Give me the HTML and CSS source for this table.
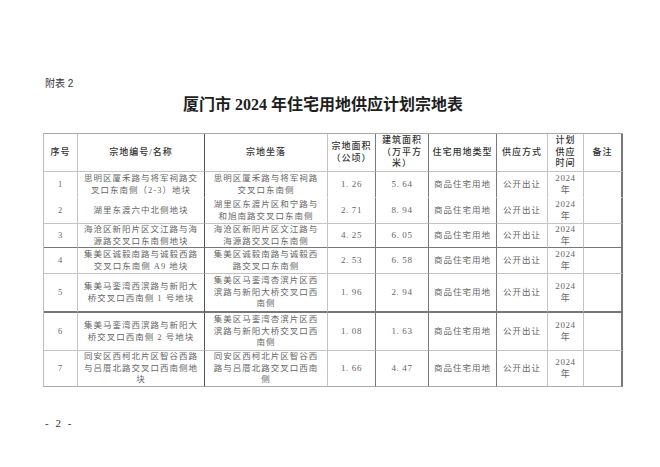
FILE: index.html
```html
<!DOCTYPE html>
<html lang="zh-CN">
<head>
<meta charset="utf-8">
<title>附表 2</title>
<link rel="stylesheet" href="styles.css">
</head>
<body>
<div class="page">
  <div class="label">附表 2</div>
  <h1 class="title">厦门市 2024 年住宅用地供应计划宗地表</h1>
  <table class="sheet">
    <thead>
      <tr class="r-head">
        <th class="c1">序号</th>
        <th class="c2">宗地编号/名称</th>
        <th class="c3">宗地坐落</th>
        <th class="c4">宗地面积<br>（公顷）</th>
        <th class="c5">建筑面积<br>（万平方<br>米）</th>
        <th class="c6">住宅用地类型</th>
        <th class="c7">供应方式</th>
        <th class="c8">计划<br>供应<br>时间</th>
        <th class="c9">备注</th>
      </tr>
    </thead>
    <tbody>
      <tr class="r1">
        <td class="c1">1</td>
        <td class="c2">思明区厦禾路与将军祠路交<br>叉口东南侧（2-3）地块</td>
        <td class="c3">思明区厦禾路与将军祠路<br>交叉口东南侧</td>
        <td class="c4 num">1. 26</td>
        <td class="c5 num">5. 64</td>
        <td class="c6">商品住宅用地</td>
        <td class="c7">公开出让</td>
        <td class="c8 num">2024<br>年</td>
        <td class="c9"></td>
      </tr>
      <tr class="r2">
        <td class="c1">2</td>
        <td class="c2">湖里东渡六中北侧地块</td>
        <td class="c3">湖里区东渡片区和宁路与<br>和旭南路交叉口东南侧</td>
        <td class="c4 num">2. 71</td>
        <td class="c5 num">8. 94</td>
        <td class="c6">商品住宅用地</td>
        <td class="c7">公开出让</td>
        <td class="c8 num">2024<br>年</td>
        <td class="c9"></td>
      </tr>
      <tr class="r3">
        <td class="c1">3</td>
        <td class="c2">海沧区新阳片区文江路与海<br>源路交叉口东南侧地块</td>
        <td class="c3">海沧区新阳片区文江路与<br>海源路交叉口东南侧</td>
        <td class="c4 num">4. 25</td>
        <td class="c5 num">6. 05</td>
        <td class="c6">商品住宅用地</td>
        <td class="c7">公开出让</td>
        <td class="c8 num">2024<br>年</td>
        <td class="c9"></td>
      </tr>
      <tr class="r4">
        <td class="c1">4</td>
        <td class="c2">集美区诚毅南路与诚毅西路<br>交叉口东南侧 A9 地块</td>
        <td class="c3">集美区诚毅南路与诚毅西<br>路交叉口东南侧</td>
        <td class="c4 num">2. 53</td>
        <td class="c5 num">6. 58</td>
        <td class="c6">商品住宅用地</td>
        <td class="c7">公开出让</td>
        <td class="c8 num">2024<br>年</td>
        <td class="c9"></td>
      </tr>
      <tr class="r5">
        <td class="c1">5</td>
        <td class="c2">集美马銮湾西滨路与新阳大<br>桥交叉口西南侧 1 号地块</td>
        <td class="c3">集美区马銮湾杏滨片区西<br>滨路与新阳大桥交叉口西<br>南侧</td>
        <td class="c4 num">1. 96</td>
        <td class="c5 num">2. 94</td>
        <td class="c6">商品住宅用地</td>
        <td class="c7">公开出让</td>
        <td class="c8 num">2024<br>年</td>
        <td class="c9"></td>
      </tr>
      <tr class="r6">
        <td class="c1">6</td>
        <td class="c2">集美马銮湾西滨路与新阳大<br>桥交叉口西南侧 2 号地块</td>
        <td class="c3">集美区马銮湾杏滨片区西<br>滨路与新阳大桥交叉口西<br>南侧</td>
        <td class="c4 num">1. 08</td>
        <td class="c5 num">1. 63</td>
        <td class="c6">商品住宅用地</td>
        <td class="c7">公开出让</td>
        <td class="c8 num">2024<br>年</td>
        <td class="c9"></td>
      </tr>
      <tr class="r7">
        <td class="c1">7</td>
        <td class="c2">同安区西柯北片区智谷西路<br>与吕厝北路交叉口西南侧地<br>块</td>
        <td class="c3">同安区西柯北片区智谷西<br>路与吕厝北路交叉口西南<br>侧</td>
        <td class="c4 num">1. 66</td>
        <td class="c5 num">4. 47</td>
        <td class="c6">商品住宅用地</td>
        <td class="c7">公开出让</td>
        <td class="c8 num">2024<br>年</td>
        <td class="c9"></td>
      </tr>
    </tbody>
  </table>
  <div class="folio">- 2 -</div>
</div>
</body>
</html>
```

FILE: styles.css
```css
html, body {
  margin: 0;
  padding: 0;
  background: #fff;
}

.page {
  width: 660px;
  height: 467px;
  box-sizing: border-box;
  padding: 78px 0 0 43px;
  font-family: "Liberation Serif", "Noto Sans CJK SC", serif;
  color: #555;
}

.label {
  padding-left: 2px;
  font-family: "Liberation Sans", "Noto Sans CJK SC", sans-serif;
  font-size: 10px;
  line-height: 12px;
  color: #333;
}

.title {
  margin: 5px 0 0 0;
  width: 560px;
  padding-right: 18px;
  text-align: center;
  font-family: "Liberation Serif", "Noto Sans CJK SC", serif;
  font-size: 16px;
  line-height: 20px;
  font-weight: bold;
  color: #1e1e1e;
}

.sheet {
  margin-top: 18px;
  width: 578px;
  table-layout: fixed;
  border-collapse: separate;
  border-spacing: 0;
  border-top: 1px solid #a8a8a8;
  border-left: 1px solid #bdbdbd;
}

.sheet th,
.sheet td {
  padding: 0;
  text-align: center;
  vertical-align: middle;
  font-size: 8.5px;
  line-height: 11.5px;
  letter-spacing: 1px;
  border-right: 1px solid #c4c4c4;
  border-bottom: 1px solid #c4c4c4;
  white-space: nowrap;
  overflow: hidden;
}

.sheet th {
  font-weight: 500;
  color: #333;
  font-size: 9px;
}

.sheet td {
  color: #666;
}

.sheet .num {
  font-size: 9px;
  letter-spacing: 0.6px;
}

/* column widths (include right border) */
.sheet .c1 { width: 33px; }
.sheet .c2 { width: 126px; }
.sheet .c3 { width: 122px; }
.sheet .c4 { width: 47px; }
.sheet .c5 { width: 52px; }
.sheet .c6 { width: 67px; }
.sheet .c7 { width: 50px; }
.sheet .c8 { width: 35px; }
.sheet .c9 { width: 37px; }

/* darker vertical rules */
.sheet .c2,
.sheet .c4,
.sheet .c5,
.sheet .c6 {
  border-right-color: #7a7a7a;
}
.sheet .c2 { border-right-color: #555; }
.sheet .c9 { border-right-color: #777; border-right-width: 2px; }

/* row heights */
.r-head { height: 38px; }
.r1 { height: 26px; }
.r2 { height: 26px; }
.r3 { height: 23px; }
.r4 { height: 26px; }
.r5 { height: 39px; }
.r6 { height: 38px; }
.r7 { height: 36px; }

/* horizontal rules */
.r1 td { border-bottom-color: transparent; }
.r3 td { border-bottom-color: #777; }
.r5 td { border-bottom-color: #777; border-bottom-width: 2px; }
.r7 td { border-bottom-color: #aaa; }

.folio {
  margin-top: 29px;
  padding-left: 2px;
  font-family: "Liberation Serif", serif;
  font-size: 11px;
  line-height: 14px;
  letter-spacing: 2px;
  color: #333;
}
```
